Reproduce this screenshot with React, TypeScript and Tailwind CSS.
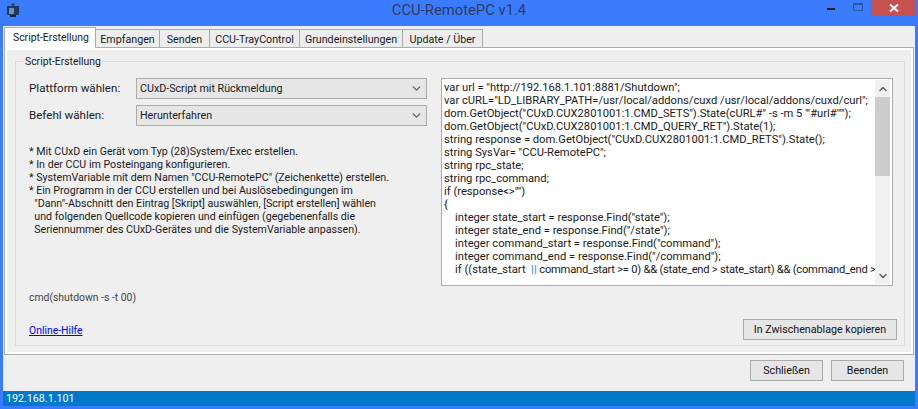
import { ChevronDown, ChevronUp } from "lucide-react";

const tabs = [
  { label: "Empfangen", width: "w-[64px]" },
  { label: "Senden", width: "w-[50px]" },
  { label: "CCU-TrayControl", width: "w-[90px]" },
  { label: "Grundeinstellungen", width: "w-[103px]" },
  { label: "Update / Über", width: "w-[80px]" },
];

const notes = [
  "* Mit CUxD ein Gerät vom Typ (28)System/Exec erstellen.",
  "* In der CCU im Posteingang konfigurieren.",
  '* SystemVariable mit dem Namen "CCU-RemotePC" (Zeichenkette) erstellen.',
  "* Ein Programm in der CCU erstellen und bei Auslösebedingungen im",
  '  "Dann"-Abschnitt den Eintrag [Skript] auswählen, [Script erstellen] wählen',
  "  und folgenden Quellcode kopieren und einfügen (gegebenenfalls die",
  "  Seriennummer des CUxD-Gerätes und die SystemVariable anpassen).",
];

const code = [
  'var url = "http://192.168.1.101:8881/Shutdown";',
  'var cURL="LD_LIBRARY_PATH=/usr/local/addons/cuxd /usr/local/addons/cuxd/curl";',
  'dom.GetObject("CUxD.CUX2801001:1.CMD_SETS").State(cURL#" -s -m 5 \'"#url#\'"");',
  'dom.GetObject("CUxD.CUX2801001:1.CMD_QUERY_RET").State(1);',
  'string response = dom.GetObject("CUxD.CUX2801001:1.CMD_RETS").State();',
  'string SysVar= "CCU-RemotePC";',
  "string rpc_state;",
  "string rpc_command;",
  'if (response<>"")',
  "{",
  '    integer state_start = response.Find("state");',
  '    integer state_end = response.Find("/state");',
  '    integer command_start = response.Find("command");',
  '    integer command_end = response.Find("/command");',
];

function Select({ value }: { value: string }) {
  return (
    <div className="w-[291px] h-[21px] flex items-center justify-between pl-[3px] pr-[3px] bg-[#e6e6e6] border border-[#acacac]">
      <span>{value}</span>
      <ChevronDown size={13} strokeWidth={2.5} className="text-[#606060]" />
    </div>
  );
}

function Button({ label, width }: { label: string; width: string }) {
  return (
    <button className={`${width} h-[21px] flex items-center justify-center bg-[#e6e6e6] border border-[#acacac] text-[#111] whitespace-nowrap`}>
      {label}
    </button>
  );
}

export default function App() {
  return (
    <div
      className="w-[918px] h-[409px] flex flex-col overflow-hidden bg-[#3b7cff] text-[10.7px] leading-[13px] text-[#1a1a1a]"
      style={{ fontFamily: 'Roboto, "Open Sans", sans-serif' }}
    >
      {/* Title bar */}
      <div className="h-[26px] shrink-0 flex items-start">
        <svg width="16" height="16" viewBox="0 0 16 16" className="ml-[6px] mt-[2px]">
          <circle cx="7" cy="2.5" r="1.6" fill="#27466f" />
          <rect x="1" y="4" width="12" height="9" fill="#1f3a5f" />
          <rect x="3" y="6" width="5" height="6" fill="#6f8fb5" />
          <rect x="4" y="13" width="6" height="2" fill="#16263d" />
        </svg>
        <div className="flex-1 pl-[69px] text-center text-[14.8px] leading-[21px] text-[#2d3d5c]">CCU-RemotePC v1.4</div>
        <div className="w-[8px] h-[2px] mt-[8px] bg-[#1c1c1c] mr-[18px]" />
        <div className="w-[10px] h-[8px] mt-[3px] border border-[#2a5aa8] border-t-2 mr-[8px]" />
        <div className="w-[45px] h-[16px] bg-[#c75050] mr-[2px] flex items-center justify-center text-white">
          <svg width="10" height="8" viewBox="0 0 10 8">
            <path d="M1 0.5 L9 7.5 M9 0.5 L1 7.5" stroke="white" strokeWidth="2" />
          </svg>
        </div>
      </div>

      {/* Client area */}
      <div className="flex-1 mx-[3px] bg-[#efefef] flex flex-col">
        <div className="mx-[1px] mt-[1px]">
          {/* Tabs */}
          <div className="flex items-end h-[21px] relative z-10">
            <div className="w-[92px] h-[21px] pl-[8px] pt-[3px] text-[10.4px] bg-white border border-b-0 border-[#acacac] whitespace-nowrap">Script-Erstellung</div>
            {tabs.map((t) => (
              <div key={t.label} className={`${t.width} h-[19px] pt-[3px] text-center bg-[#ededed] border border-l-0 border-[#acacac] whitespace-nowrap`}>
                {t.label}
              </div>
            ))}
          </div>

          {/* Tab panel */}
          <div className="h-[308px] w-[910px] border border-[#acacac] bg-white p-[2px] -mt-[1px]">
            <div className="h-full bg-[#efefef] pt-[11px] pl-[8px] pr-[6px] pb-[6px]">
              <fieldset className="relative h-full border border-[#dcdcdc] flex">
                <legend className="absolute -top-[7px] left-[8px] bg-[#efefef] px-[1px] text-[10.4px]">Script-Erstellung</legend>

                <div className="w-[425px] pl-[13px] pt-[16px] flex flex-col">
                  <div className="flex items-center">
                    <span className="w-[107px] text-[11.6px]">Plattform wählen:</span>
                    <Select value="CUxD-Script mit Rückmeldung" />
                  </div>
                  <div className="flex items-center mt-[6px]">
                    <span className="w-[107px] text-[11.6px]">Befehl wählen:</span>
                    <Select value="Herunterfahren" />
                  </div>
                  <div className="mt-[19px] whitespace-pre text-[10.65px]">
                    {notes.map((n) => (
                      <div key={n}>{n}</div>
                    ))}
                  </div>
                  <div className="mt-[55px] text-[#444] text-[10.4px]">cmd(shutdown -s -t 00)</div>
                  <a href="#" className="mt-[20px] text-[#0000ff] underline text-[10.4px]">Online-Hilfe</a>
                </div>

                <div className="flex-1 pt-[16px] flex flex-col items-start">
                  <div className="w-[452px] h-[208px] flex bg-white border border-[#acacac] overflow-hidden">
                    <div className="flex-1 overflow-hidden whitespace-pre pl-[2px] pt-[2px] text-[11.2px]">
                      {code.map((c) => (
                        <div key={c}>{c}</div>
                      ))}
                      <div>
                        {"    if ((state_start  "}
                        <span className="text-[#4a90d9] font-bold">||</span>
                        <span className="tracking-[-0.25px]">{" command_start >= 0) && (state_end > state_start) && (command_end >"}</span>
                      </div>
                    </div>
                    <div className="w-[15px] my-[1px] mr-[2px] bg-[#f0f0f0] flex flex-col items-center justify-between">
                      <div className="w-full flex flex-col">
                        <div className="h-[17px] flex items-center justify-center">
                          <ChevronUp size={12} strokeWidth={3} className="text-[#606060]" />
                        </div>
                        <div className="h-[79px] bg-[#cdcdcd]" />
                      </div>
                      <div className="h-[17px] flex items-center justify-center">
                        <ChevronDown size={12} strokeWidth={3} className="text-[#606060]" />
                      </div>
                    </div>
                  </div>
                  <div className="mt-[33px] w-[456px] flex justify-end">
                    <Button label="In Zwischenablage kopieren" width="w-[154px]" />
                  </div>
                </div>
              </fieldset>
            </div>
          </div>
        </div>

        {/* Footer buttons */}
        <div className="flex justify-end gap-[8px] pr-[11px] mt-[5px]">
          <Button label="Schließen" width="w-[73px]" />
          <Button label="Beenden" width="w-[73px]" />
        </div>
      </div>

      {/* Status bar */}
      <div className="h-[15px] mx-[3px] mb-[3px] shrink-0 bg-[#0079cb] text-white pl-[3px] leading-[15px]">192.168.1.101</div>
    </div>
  );
}
